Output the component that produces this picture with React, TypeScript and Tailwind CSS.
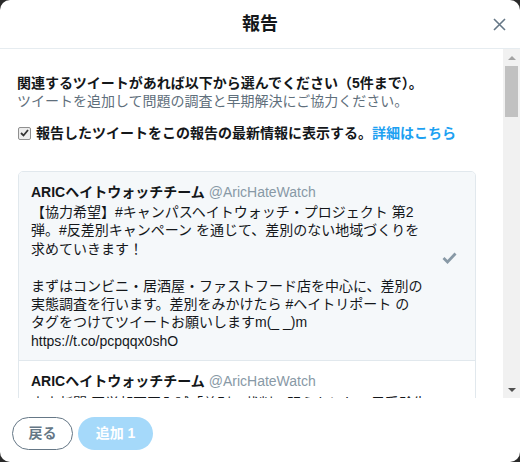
import React from 'react'

const tweetLines = [
  '【協力希望】#キャンパスヘイトウォッチ・プロジェクト 第2',
  '弾。#反差別キャンペーン を通じて、差別のない地域づくりを',
  '求めていきます！',
  '',
  'まずはコンビニ・居酒屋・ファストフード店を中心に、差別の',
  '実態調査を行います。差別をみかけたら #ヘイトリポート の',
  'タグをつけてツイートお願いしますm(_ _)m',
  'https://t.co/pcpqqx0shO',
]

function TweetHeader() {
  return (
    <div className="whitespace-nowrap text-[14px] leading-[20px]">
      <span className="font-bold text-[#14171a]">ARICヘイトウォッチチーム</span>{' '}
      <span className="text-[#8899a6]">@AricHateWatch</span>
    </div>
  )
}

export default function App() {
  return (
    <div className="h-[462px] w-[520px] bg-[#2a2a2a]">
      <div className="flex h-full flex-col overflow-hidden rounded-[10px] bg-white font-['Liberation_Sans','Noto_Sans_CJK_JP',sans-serif]">
        {/* Header */}
        <div className="grid h-[49px] shrink-0 grid-cols-[1fr_auto_1fr] items-center border-b border-[#e6ecf0]">
          <div />
          <h1 className="text-[18px] font-bold text-[#14171a]">報告</h1>
          <button className="justify-self-end pr-[14px]">
            <svg width="13" height="13" viewBox="0 0 13 13">
              <path d="M1 1 L12 12 M12 1 L1 12" stroke="#657786" strokeWidth="1.6" fill="none" />
            </svg>
          </button>
        </div>

        {/* Body */}
        <div className="flex min-h-0 flex-1">
          <div className="flex-1 overflow-hidden px-[17px] pt-[25px]">
            <p className="whitespace-nowrap text-[14px] font-bold leading-[18px] text-[#14171a]">
              関連するツイートがあれば以下から選んでください（5件まで）。
            </p>
            <p className="whitespace-nowrap text-[14px] leading-[18px] text-[#5f6f7c]">
              ツイートを追加して問題の調査と早期解決にご協力ください。
            </p>

            <label className="mt-[14px] flex items-center gap-[5px] whitespace-nowrap text-[14px] font-bold leading-[18px]">
              <span className="ml-[1px] flex h-[13px] w-[13px] items-center justify-center rounded-[2px] border border-[#8f8f8f] bg-[#ececec]">
                <svg width="9" height="8" viewBox="0 0 9 8">
                  <path d="M1 4 L3.5 6.5 L8 1" stroke="#333" strokeWidth="1.8" fill="none" />
                </svg>
              </span>
              <span className="text-[#14171a]">
                報告したツイートをこの報告の最新情報に表示する。
                <span className="text-[#1da1f2]">詳細はこちら</span>
              </span>
            </label>

            <div className="ml-[1px] mt-[29px] w-[458px] overflow-hidden rounded-t-[5px] border border-[#e1e8ed]">
              <div className="flex items-center border-b border-[#e1e8ed] bg-[#f5f8fa] pb-[10px] pl-[12px] pr-[18px] pt-[10px]">
                <div className="flex-1">
                  <TweetHeader />
                  <div className="mt-[1px] text-[14px] leading-[18.4px] text-[#14171a]">
                    {tweetLines.map((line, i) =>
                      line === '' ? (
                        <div key={i} className="h-[18.4px]" />
                      ) : (
                        <div key={i} className="whitespace-nowrap">
                          {line}
                        </div>
                      )
                    )}
                  </div>
                </div>
                <svg width="15" height="12" viewBox="0 0 15 12" className="-mt-[16px]">
                  <path d="M1.5 6 L5.5 10 L13.5 1.5" stroke="#8899a6" strokeWidth="2.8" fill="none" />
                </svg>
              </div>
              <div className="bg-white pl-[12px] pr-[18px] pt-[10px]">
                <TweetHeader />
                <div className="mt-[3px] whitespace-nowrap text-[14px] leading-[18.4px] text-[#14171a]">
                  東京新聞:医学部不正入試「差別」裁判で明らかにし　元受験生
                </div>
                <div className="h-[40px]" />
              </div>
            </div>
          </div>

          {/* Scrollbar */}
          <div className="flex w-[17px] shrink-0 flex-col bg-[#f1f1f1]">
            <div className="flex h-[17px] items-center justify-center">
              <svg width="8" height="4" viewBox="0 0 8 4">
                <path d="M0 4 L4 0 L8 4 Z" fill="#a3a3a3" />
              </svg>
            </div>
            <div className="mx-[2px] h-[51px] bg-[#c1c1c1]" />
            <div className="flex-1" />
            <div className="flex h-[17px] items-center justify-center">
              <svg width="8" height="4" viewBox="0 0 8 4">
                <path d="M0 0 L8 0 L4 4 Z" fill="#505050" />
              </svg>
            </div>
          </div>
        </div>

        {/* Footer */}
        <div className="flex h-[64px] shrink-0 gap-[5px] px-[12px] pt-[19px]">
          <button className="h-[33px] w-[61px] rounded-full border border-[#657786] text-[14px] font-bold text-[#657786]">
            戻る
          </button>
          <button className="h-[33px] w-[75px] rounded-full bg-[#a5d9fa] text-[14px] font-bold text-white">
            追加 1
          </button>
        </div>
      </div>
    </div>
  )
}
